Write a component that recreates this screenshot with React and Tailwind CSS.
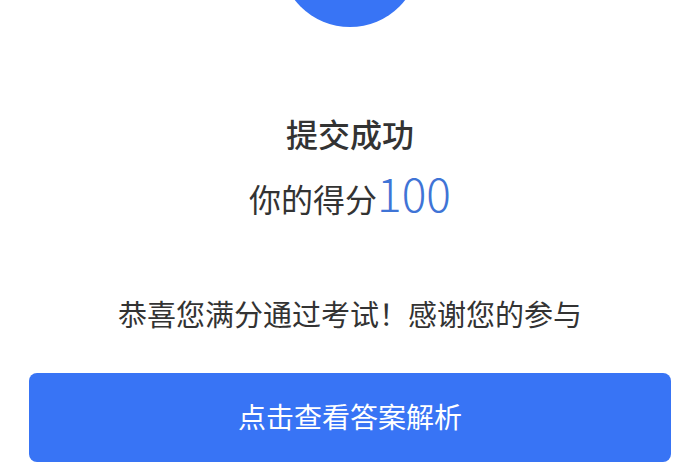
export default function App() {
  return (
    <div
      className="flex h-[470px] w-[700px] flex-col items-center overflow-hidden bg-white"
      style={{ fontFamily: '"Noto Sans CJK SC", "Noto Sans", sans-serif' }}
    >
      <div className="-mt-[113px] h-[140px] w-[140px] shrink-0 rounded-full bg-[#3874f5]" />
      <h1 className="mt-[86px] text-[32px] font-medium leading-[40px] text-[#333333]">提交成功</h1>
      <p className="mt-[17px] flex items-baseline text-[32px] leading-[44px] text-[#333333]">
        你的得分
        <span className="text-[46px] font-light leading-[44px] text-[#3f74d6]">100</span>
      </p>
      <p className="mt-[73px] text-[29px] leading-[40px] text-[#333333]">恭喜您满分通过考试！感谢您的参与</p>
      <button
        type="button"
        className="mt-[40px] h-[89px] w-[642px] shrink-0 rounded-[8px] bg-[#3874f5] pb-[4px] text-[28px] text-white"
      >
        点击查看答案解析
      </button>
    </div>
  );
}
